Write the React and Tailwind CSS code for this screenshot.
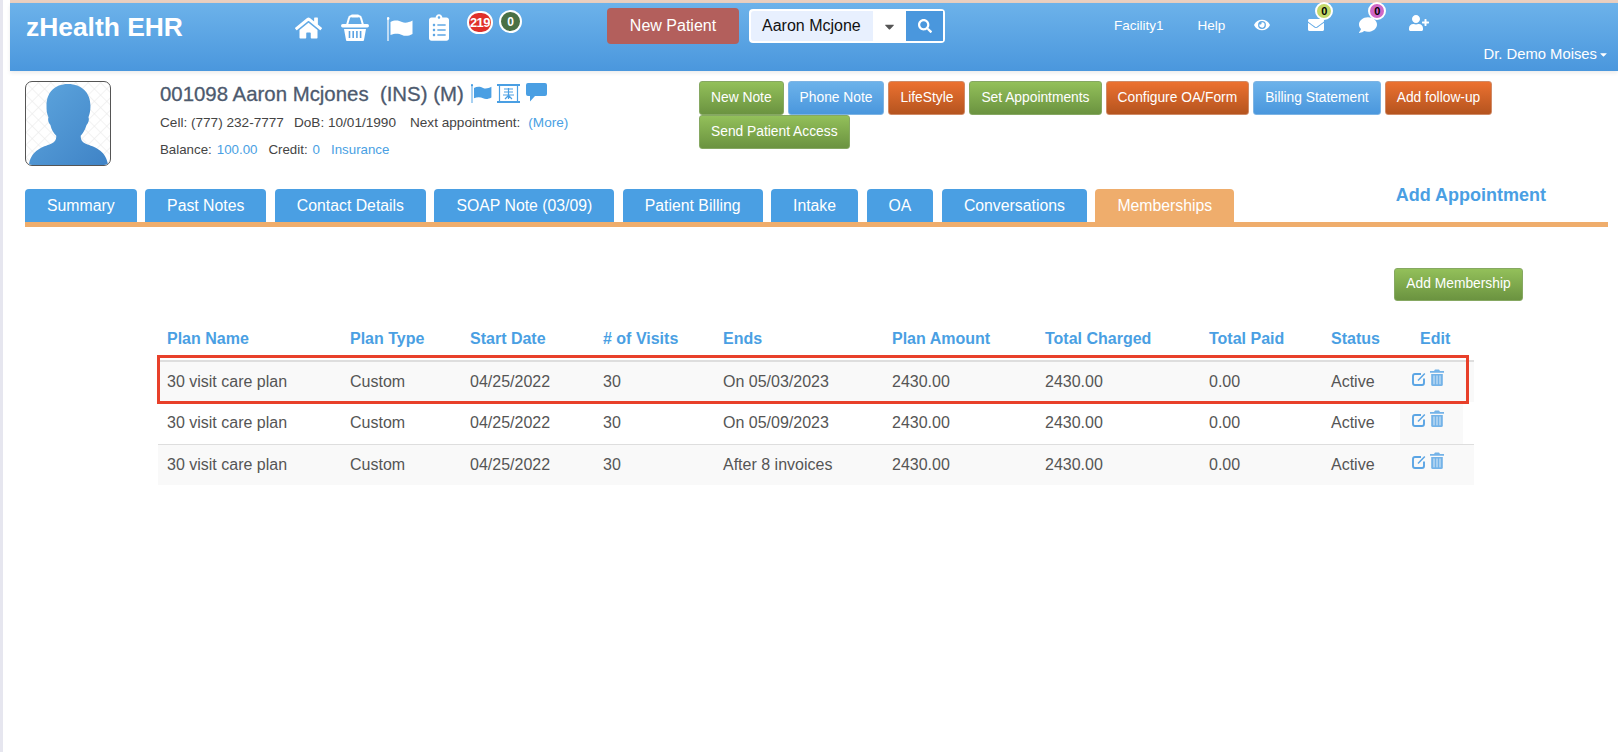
import React from "react";
import { FaHome, FaClipboardList, FaEye, FaEnvelope, FaComment, FaUserPlus, FaSearch, FaCaretDown } from "react-icons/fa";

function Basket({ className }) {
  return (
    <svg viewBox="0 0 28 27" className={className} fill="none">
      <path d="M6 11 L8 4 Q8.5 2 11 2 H17 Q19.5 2 20 4 L22 11" stroke="#fff" strokeWidth="2" />
      <rect x="10" y="0.5" width="8" height="3" rx="1" fill="#fff" />
      <rect x="0" y="10" width="28" height="3.5" rx="1.7" fill="#fff" />
      <path d="M3 15 H25 L23 26 Q23 27 22 27 H6 Q5 27 5 26 Z" fill="#fff" />
      <path d="M8.5 17 V24 M12.2 17 V24 M15.9 17 V24 M19.6 17 V24" stroke="#5ba3e3" strokeWidth="1.6" />
    </svg>
  );
}

function Flag({ className, color = "#fff" }) {
  return (
    <svg viewBox="0 0 26 24" className={className}>
      <rect x="0.4" y="1.5" width="1.2" height="22.5" fill={color} />
      <circle cx="1" cy="1.5" r="1.4" fill={color} />
      <path d="M3.5 5 C8 2.5 12 3.5 15 5 C18 6.3 22 5.5 25.5 3.5 V17 C22 19 18 19.5 15 18 C12 16.5 8 16 3.5 18 Z" fill={color} />
    </svg>
  );
}

function Scroll({ className }) {
  return (
    <svg viewBox="0 0 23 19" className={className} fill="none" stroke="#4a9fe3">
      <path d="M0 1 H23 M0 18 H23" strokeWidth="2" />
      <path d="M2.5 2 V17 M20.5 2 V17" strokeWidth="1.2" />
      <path d="M7 5 H16 M7 8 H16 M6 11 H17 M11.5 4 V15 M8 15 L11 12 M15 15 L12 12" strokeWidth="1.2" />
    </svg>
  );
}

function Bubble({ className }) {
  return (
    <svg viewBox="0 0 21 19" className={className}>
      <path d="M2 0 H19 Q21 0 21 2 V11 Q21 13 19 13 H9 L4 18.5 V13 H2 Q0 13 0 11 V2 Q0 0 2 0 Z" fill="#4a9fe3" />
    </svg>
  );
}

function EditIcon({ className }) {
  return (
    <svg viewBox="0 0 14 14" className={className} fill="none" stroke="#5ba5e4">
      <path d="M9 2 H3 Q1 2 1 4 V11 Q1 13 3 13 H10 Q12 13 12 11 V6.5" strokeWidth="1.9" />
      <path d="M6 8.5 L12.8 1.5" strokeWidth="1.5" />
    </svg>
  );
}

function TrashIcon({ className }) {
  return (
    <svg viewBox="0 0 14 17" className={className}>
      <path d="M5 0.5 H9 L10 2 H14 V3.8 H0 V2 H4 Z" fill="#74b3e8" />
      <path d="M1.2 5 H12.8 V15.5 Q12.8 17 11.3 17 H2.7 Q1.2 17 1.2 15.5 Z" fill="#74b3e8" />
      <path d="M4 6.5 V15.3 M7 6.5 V15.3 M10 6.5 V15.3" stroke="#e8f2fb" strokeWidth="0.9" />
    </svg>
  );
}

function Avatar() {
  return (
    <div className="w-[86px] h-[85px] shrink-0 rounded-[7px] border border-[#555] overflow-hidden bg-white">
      <svg viewBox="0 0 86 85" className="w-full h-full">
        <defs>
          <pattern id="hatch" width="9" height="9" patternUnits="userSpaceOnUse" patternTransform="rotate(45)">
            <path d="M0 0 H9 M0 0 V9" stroke="#e6e6e6" strokeWidth="1" />
          </pattern>
          <linearGradient id="sil" x1="0" y1="0" x2="1" y2="1">
            <stop offset="0" stopColor="#5ea6de" />
            <stop offset="1" stopColor="#3f83c6" />
          </linearGradient>
        </defs>
        <rect width="86" height="85" fill="url(#hatch)" />
        <path
          d="M43 2 C57 2 66 11 66 24 C66 30 65 33 64 36 C65 38 64 42 62 44 C60 50 58 53 56 55 C56 60 58 62 63 64 C72 67 82 71 84 85 H3 C5 71 15 67 24 64 C29 62 31 60 31 55 C28 52 26 49 25 44 C23 42 22 38 23 36 C21 32 21 28 21 24 C21 11 29 2 43 2 Z"
          fill="url(#sil)"
        />
      </svg>
    </div>
  );
}

const buttonStyles = {
  green: "bg-gradient-to-b from-[#93c05a] to-[#6b9340] border-[#86a862]",
  blue: "bg-gradient-to-b from-[#6cb2ea] to-[#4a97dd] border-[#7db4e4]",
  orange: "bg-gradient-to-b from-[#ec7130] to-[#b5541f] border-[#d08a66]",
};

function Btn({ color, children }) {
  return (
    <button className={`h-[34px] px-[11px] rounded-[3px] border text-[13.8px] text-white whitespace-nowrap ${buttonStyles[color]}`}>
      {children}
    </button>
  );
}

const tabs = ["Summary", "Past Notes", "Contact Details", "SOAP Note (03/09)", "Patient Billing", "Intake", "OA", "Conversations"];
const columns = ["Plan Name", "Plan Type", "Start Date", "# of Visits", "Ends", "Plan Amount", "Total Charged", "Total Paid", "Status"];
const gridCols = "grid grid-cols-[183px_120px_133px_120px_169px_153px_164px_122px_78px_74px]";
const rows = [
  { ends: "On 05/03/2023", bg: "bg-[#f9f9f9]", editBg: "", border: "border-t-2 border-[#dedede]" },
  { ends: "On 05/09/2023", bg: "bg-white", editBg: "bg-[#f9f9f9]", border: "border-t border-transparent" },
  { ends: "After 8 invoices", bg: "bg-[#f9f9f9]", editBg: "", border: "border-t border-[#dedede]" },
];

function Row({ row }) {
  const cells = ["30 visit care plan", "Custom", "04/25/2022", "30", row.ends, "2430.00", "2430.00", "0.00", "Active"];
  return (
    <div className={`${gridCols} h-[41.8px] items-stretch text-[16px] text-[#555] ${row.bg} ${row.border}`}>
      {cells.map((c, i) => (
        <div key={i} className="pl-[9px] flex items-center whitespace-nowrap">{c}</div>
      ))}
      <div className={`w-[63px] flex items-start pl-[12px] gap-[4px] pt-[9px] ${row.editBg}`}>
        <EditIcon className="w-[14px] h-[14px] mt-[1px]" />
        <TrashIcon className="w-[14px] h-[17px] -mt-[2px]" />
      </div>
    </div>
  );
}

export default function App() {
  return (
    <div className="flex min-h-[752px] bg-white [font-family:Liberation_Sans,Arial,sans-serif] overflow-hidden">
      <div className="w-[3px] shrink-0 bg-[#e6e6ef]" />
      <div className="ml-[7px] flex-1 min-w-0">
        <div className="h-[3px] bg-[#e9cfc0]" />
        <header className="relative h-[68px] bg-gradient-to-b from-[#6cb2ea] to-[#4a97dd] shadow-[0_2px_4px_rgba(0,0,0,0.08)] flex items-start text-white">
          <div className="ml-[16px] mt-[8px] text-[26.4px] leading-[32px] font-bold w-[269px] whitespace-nowrap">zHealth EHR</div>
          <div className="flex items-start mt-[10px]">
            <FaHome className="w-[27px] h-[24px] mt-[3px]" />
            <Basket className="w-[28px] h-[27px] ml-[19px] mt-[1px]" />
            <Flag className="w-[26px] h-[24px] ml-[18px] mt-[4px]" />
            <FaClipboardList className="w-[20px] h-[27px] ml-[16px] mt-[1px]" />
            <div className="ml-[18px] -mt-[2px] w-[26px] h-[23px] rounded-full border-2 border-white bg-[#e0302a] flex items-center justify-center text-[13px] font-bold tracking-[-0.5px]">219</div>
            <div className="ml-[6px] -mt-[3px] w-[23px] h-[23px] rounded-full border-2 border-white bg-[#4a7044] flex items-center justify-center text-[12px] font-bold">0</div>
          </div>
          <button className="ml-[85px] mt-[5px] w-[132px] h-[36px] rounded-[4px] bg-[#b35f5c] text-[16px] text-white">New Patient</button>
          <div className="ml-[10px] mt-[6px] w-[196px] h-[34px] rounded-[4px] bg-white p-[2px] flex items-stretch">
            <div className="w-[122px] bg-[#e8f0fe] rounded-l-[3px] pl-[11px] text-[16px] leading-[30px] text-[#111] whitespace-nowrap">Aaron Mcjone</div>
            <div className="w-[33px] flex items-center justify-center text-[#555]"><FaCaretDown className="w-[15px] h-[15px]" /></div>
            <div className="w-[37px] bg-[#4a97dd] flex items-center justify-center"><FaSearch className="w-[14px] h-[14px]" /></div>
          </div>
          <div className="ml-auto mr-[9px] w-[495px] flex flex-col">
            <div className="flex items-start h-[44px] text-[13.5px]">
              <span className="mt-[13px]">Facility1</span>
              <span className="ml-[34px] mt-[13px]">Help</span>
              <FaEye className="ml-[28px] mt-[15px] w-[18px] h-[14px]" />
              <span className="relative ml-[37px] mt-[14px]">
                <FaEnvelope className="w-[16px] h-[16px]" />
                <span className="absolute left-[7px] -top-[15px] w-[18px] h-[18px] rounded-full border-2 border-white bg-[#c4d96a] text-black text-[11px] font-bold flex items-center justify-center">0</span>
              </span>
              <span className="relative ml-[35px] mt-[13px]">
                <FaComment className="w-[18px] h-[18px]" />
                <span className="absolute left-[9px] -top-[14px] w-[18px] h-[18px] rounded-full border-2 border-white bg-[#d067c6] text-black text-[11px] font-bold flex items-center justify-center">0</span>
              </span>
              <FaUserPlus className="ml-[32px] mt-[12px] w-[20px] h-[16px]" />
            </div>
            <div className="flex justify-end items-center text-[14.8px] leading-[18px] -mt-[2px]">
              Dr. Demo Moises<FaCaretDown className="w-[11px] h-[11px] ml-[1px]" />
            </div>
          </div>
        </header>

        <div className="pl-[15px] pr-[10px]">
          <div className="flex items-start mt-[10px]">
            <Avatar />
            <div className="ml-[49px] w-[539px] shrink-0 text-[13.6px] text-[#444]">
              <div className="flex items-center h-[28px] -mt-[1px]">
                <span className="text-[20.4px] [-webkit-text-stroke:0.3px] text-[#4d5a6e] whitespace-pre">001098 Aaron Mcjones  (INS) (M)</span>
                <Flag className="w-[21px] h-[19px] ml-[7px] -mt-[2px]" color="#4a9fe3" />
                <Scroll className="w-[23px] h-[19px] ml-[5px] -mt-[2px]" />
                <Bubble className="w-[21px] h-[19px] ml-[6px] -mt-[4px]" />
              </div>
              <div className="flex h-[18px] leading-[18px] mt-[6px] whitespace-nowrap">
                <span>Cell: (777) 232-7777</span>
                <span className="ml-[10px]">DoB: 10/01/1990</span>
                <span className="ml-[14px]">Next appointment:</span>
                <span className="ml-[8px] text-[#4a9fe3]">(More)</span>
              </div>
              <div className="flex h-[18px] leading-[18px] mt-[9px] whitespace-nowrap text-[13.3px]">
                <span>Balance:</span>
                <span className="ml-[5px] text-[#4a9fe3]">100.00</span>
                <span className="ml-[11px]">Credit:</span>
                <span className="ml-[5px] text-[#4a9fe3]">0</span>
                <span className="ml-[11px] text-[#4a9fe3]">Insurance</span>
              </div>
            </div>
            <div className="w-[810px] flex flex-wrap gap-x-[4px]">
              <Btn color="green">New Note</Btn>
              <Btn color="blue">Phone Note</Btn>
              <Btn color="orange">LifeStyle</Btn>
              <Btn color="green">Set Appointments</Btn>
              <Btn color="orange">Configure OA/Form</Btn>
              <Btn color="blue">Billing Statement</Btn>
              <Btn color="orange">Add follow-up</Btn>
              <Btn color="green">Send Patient Access</Btn>
            </div>
          </div>

          <div className="mt-[23px] flex items-end border-b-[5px] border-[#efad6c] h-[38px]">
            <div className="flex gap-[8.5px] items-end">
              {tabs.map((t) => (
                <div key={t} className="h-[33px] px-[22px] rounded-t-[4px] bg-[#4a9fe3] text-white text-[15.8px] leading-[33px] whitespace-nowrap">{t}</div>
              ))}
              <div className="h-[33px] px-[22px] rounded-t-[4px] bg-[#efad6c] text-white text-[15.8px] leading-[33px] whitespace-nowrap">Memberships</div>
            </div>
            <div className="ml-auto mr-[62px] mb-[15px] text-[18px] font-bold leading-[24px] text-[#4a9fe3]">Add Appointment</div>
          </div>

          <div className="flex justify-end mt-[41px] mr-[85px]">
            <button className={`h-[33px] w-[129px] rounded-[3px] border text-[13.8px] text-white ${buttonStyles.green}`}>Add Membership</button>
          </div>

          <div className="relative ml-[133px] w-[1316px] mt-[20px]">
            <div className={`${gridCols} h-[39px] items-center pb-[4px] text-[16px] font-bold text-[#4a9fe3]`}>
              {columns.map((c) => (
                <div key={c} className="pl-[9px] whitespace-nowrap">{c}</div>
              ))}
              <div className="pl-[20px] whitespace-nowrap">Edit</div>
            </div>
            {rows.map((r) => (
              <Row key={r.ends} row={r} />
            ))}
            <div className="absolute left-[-1px] top-[34px] w-[1312px] h-[49px] border-[3px] border-[#e8402a] pointer-events-none" />
          </div>
        </div>
      </div>
    </div>
  );
}
